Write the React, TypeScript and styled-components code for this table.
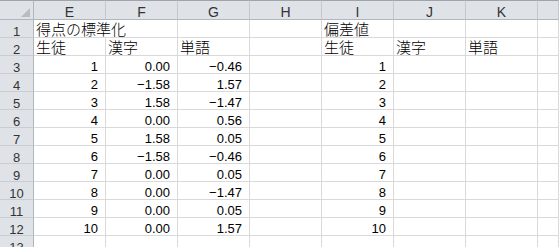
import React from "react";
import styled, { createGlobalStyle } from "styled-components";

const GlobalStyle = createGlobalStyle`
  html, body {
    margin: 0;
    padding: 0;
    background: #ffffff;
    overflow: hidden;
    height: 247px;
  }
`;

const columns = ["E", "F", "G", "H", "I", "J", "K", ""];

const kanji = ["0.00", "−1.58", "1.58", "0.00", "1.58", "−1.58", "0.00", "0.00", "0.00", "0.00"];
const tango = ["−0.46", "1.57", "−1.47", "0.56", "0.05", "−0.46", "0.05", "−1.47", "0.05", "1.57"];

type CellData = { text?: string; kind?: "jp" | "num"; span?: number };

const rows: CellData[][] = [
  [{ text: "得点の標準化", kind: "jp", span: 2 }, {}, {}, { text: "偏差値", kind: "jp" }, {}, {}, {}],
  [
    { text: "生徒", kind: "jp" },
    { text: "漢字", kind: "jp" },
    { text: "単語", kind: "jp" },
    {},
    { text: "生徒", kind: "jp" },
    { text: "漢字", kind: "jp" },
    { text: "単語", kind: "jp" },
    {},
  ],
  ...kanji.map((k, i) => [
    { text: String(i + 1), kind: "num" as const },
    { text: k, kind: "num" as const },
    { text: tango[i], kind: "num" as const },
    {},
    { text: String(i + 1), kind: "num" as const },
    {},
    {},
    {},
  ]),
  [{}, {}, {}, {}, {}, {}, {}, {}],
];

const App: React.FC = () => {
  return (
    <>
      <GlobalStyle />
      <Sheet>
        <Corner>
          <svg width="9" height="9" viewBox="0 0 9 9">
            <polygon points="9,0 9,9 0,9" fill="#b9bdc2" />
          </svg>
        </Corner>
        {columns.map((c, i) => (
          <ColHead key={i}>{c}</ColHead>
        ))}
        {rows.map((row, r) => (
          <React.Fragment key={r}>
            <RowHead>{r + 1}</RowHead>
            {row.map((cell, c) => (
              <Cell key={c} $kind={cell.kind} $span={cell.span ?? 1}>
                {cell.text}
              </Cell>
            ))}
          </React.Fragment>
        ))}
      </Sheet>
    </>
  );
};

export default App;

const Sheet = styled.div`
  display: grid;
  grid-template-columns: 34px repeat(7, 72px) 1fr;
  grid-template-rows: 20px;
  grid-auto-rows: 18px;
  width: 559px;
  background: #ffffff;
`;

const Corner = styled.div`
  box-sizing: border-box;
  display: flex;
  justify-content: flex-end;
  align-items: flex-end;
  padding: 0 3px 2px 0;
  background: #dfe3e8;
  border-top: 1px solid #9fa4aa;
  border-right: 1px solid #b1b6bc;
  border-bottom: 1px solid #b1b6bc;
`;

const ColHead = styled.div`
  box-sizing: border-box;
  background: #dfe3e8;
  border-top: 1px solid #9fa4aa;
  border-right: 1px solid #c3c8ce;
  border-bottom: 1px solid #b1b6bc;
  padding-top: 3px;
  font-family: "Liberation Sans", Arial, sans-serif;
  font-size: 14px;
  line-height: normal;
  color: #333333;
  text-align: center;
`;

const RowHead = styled.div`
  box-sizing: border-box;
  background: #dfe3e8;
  border-right: 1px solid #b1b6bc;
  border-bottom: 1px solid #c8cdd3;
  padding-top: 4px;
  font-family: "Liberation Sans", Arial, sans-serif;
  font-size: 13px;
  line-height: normal;
  color: #333333;
  text-align: center;
  white-space: nowrap;
  overflow: hidden;
`;

const Cell = styled.div<{ $kind?: "jp" | "num"; $span: number }>`
  box-sizing: border-box;
  grid-column: span ${(p) => p.$span};
  border-right: 1px solid #d9d9d9;
  border-bottom: 1px solid #d9d9d9;
  white-space: nowrap;
  color: #000000;
  ${(p) =>
    p.$kind === "num"
      ? `
    font-family: "Liberation Sans", Arial, sans-serif;
    font-size: 13px;
    line-height: normal;
    padding: 3px 7px 0 0;
    text-align: right;
  `
      : `
    font-family: "Noto Sans CJK JP", "Liberation Sans", sans-serif;
    font-size: 15px;
    font-weight: 300;
    line-height: 17px;
    padding: 0 0 0 2px;
    text-align: left;
  `}
`;
